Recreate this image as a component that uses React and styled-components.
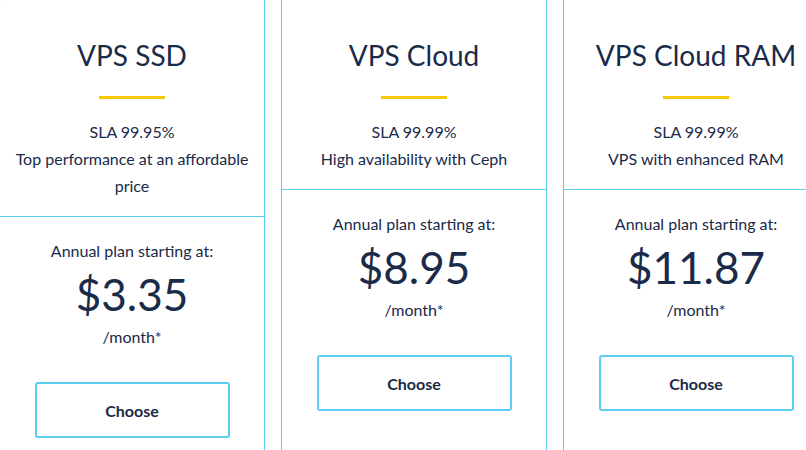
import React from 'react';
import styled, { createGlobalStyle } from 'styled-components';

const GlobalStyle = createGlobalStyle`
  html, body {
    margin: 0;
    padding: 0;
    background: #ffffff;
  }
  body {
    font-family: "Lato", "Noto Sans", sans-serif;
    color: #1a2a49;
    overflow: hidden;
  }
`;

const Page = styled.div`
  width: 806px;
  height: 450px;
  overflow: hidden;
`;

const Row = styled.div`
  display: flex;
  align-items: stretch;
  gap: 16px;
  margin-left: -1px;
  margin-top: -3px;
`;

const Card = styled.div`
  box-sizing: border-box;
  flex: 0 0 266px;
  min-height: 480px;
  border: 1px solid #5ccdee;
  border-radius: 4px;
  background: #ffffff;
  display: flex;
  flex-direction: column;
`;

const Head = styled.div`
  padding: 37px 8px 17px;
  text-align: center;
  border-bottom: 1px solid #5ccdee;
`;

const Title = styled.h2`
  margin: 0;
  font-size: 28px;
  line-height: 40px;
  font-weight: 400;
  white-space: nowrap;
`;

const Bar = styled.div`
  width: 66px;
  height: 3px;
  margin: 21px auto 19px;
  background: #f6c800;
`;

const Line = styled.p`
  margin: 0;
  font-size: 16px;
  line-height: 27px;
`;

const Body = styled.div`
  padding: 20px 10px 0;
  display: flex;
  flex-direction: column;
  align-items: center;
  text-align: center;
`;

const Price = styled.div`
  margin: 4px 0 3px;
  font-size: 44px;
  line-height: 52px;
  font-weight: 400;
`;

const Button = styled.button`
  box-sizing: border-box;
  margin-top: 32px;
  width: 195px;
  height: 56px;
  border: 2px solid #5ccdee;
  border-radius: 3px;
  background: #ffffff;
  color: #1a2a49;
  font-family: "Lato", "Noto Sans", sans-serif;
  font-size: 16px;
  font-weight: 700;
  cursor: pointer;
`;

const plans = [
  { name: 'VPS SSD', sla: 'SLA 99.95%', desc: ['Top performance at an affordable', 'price'], price: '$3.35' },
  { name: 'VPS Cloud', sla: 'SLA 99.99%', desc: ['High availability with Ceph'], price: '$8.95' },
  { name: 'VPS Cloud RAM', sla: 'SLA 99.99%', desc: ['VPS with enhanced RAM'], price: '$11.87' },
];

const App = () => {
  return (
    <Page>
      <GlobalStyle />
      <Row>
        {plans.map((plan) => (
          <Card key={plan.name}>
            <Head>
              <Title>{plan.name}</Title>
              <Bar />
              <Line>{plan.sla}</Line>
              {plan.desc.map((d) => (
                <Line key={d}>{d}</Line>
              ))}
            </Head>
            <Body>
              <Line>Annual plan starting at:</Line>
              <Price>{plan.price}</Price>
              <Line>/month*</Line>
              <Button>Choose</Button>
            </Body>
          </Card>
        ))}
      </Row>
    </Page>
  );
};

export default App;
